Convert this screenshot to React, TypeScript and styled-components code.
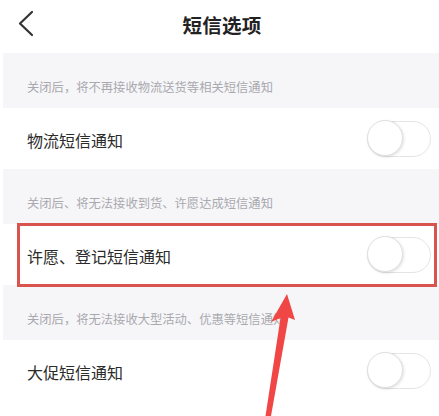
import React from "react";
import styled, { createGlobalStyle } from "styled-components";

const Global = createGlobalStyle`
  html, body { margin: 0; padding: 0; background: #ffffff; }
  body { font-family: "Noto Sans CJK SC", "Noto Sans", sans-serif; }
  * { box-sizing: border-box; }
`;

const Page = styled.div`
  position: relative;
  width: 439px;
  height: 416px;
  overflow: hidden;
  background: #ffffff;
  display: flex;
  flex-direction: column;
`;

const Header = styled.header`
  height: 53px;
  flex: none;
  display: flex;
  align-items: center;
  justify-content: center;
  position: relative;
`;

const BackButton = styled.button`
  position: absolute;
  left: 14px;
  top: 8px;
  width: 24px;
  height: 32px;
  padding: 0;
  border: none;
  background: none;
  display: flex;
  align-items: center;
  justify-content: center;
`;

const Title = styled.h1`
  margin: 0 0 4px 5px;
  font-size: 19.5px;
  font-weight: 700;
  color: #222222;
  letter-spacing: 0.2px;
`;

const Hint = styled.div`
  height: 55px;
  flex: none;
  margin-left: 3px;
  background: #f6f6f9;
  display: flex;
  align-items: flex-end;
  padding: 0 0 13px 24px;
  font-size: 12.3px;
  color: #a9a9ae;
  line-height: 16px;
`;

const Row = styled.div<{ $h: number }>`
  position: relative;
  height: ${(p) => p.$h}px;
  flex: none;
  display: flex;
  align-items: center;
  justify-content: space-between;
  padding: 0 8px 0 27px;
  background: #ffffff;
`;

const Label = styled.span`
  font-size: 16px;
  color: #2b2b2b;
  margin-top: 2px;
`;

const Track = styled.div`
  position: relative;
  width: 64px;
  height: 36px;
  border-radius: 18px;
  border: 1.5px solid #e4e4e6;
  background: #ffffff;
`;

const Knob = styled.div`
  position: absolute;
  left: -1.5px;
  top: -1.5px;
  width: 36px;
  height: 36px;
  border-radius: 50%;
  background: #ffffff;
  border: 1.5px solid #e0e0e2;
  box-shadow: 1px 1px 3px rgba(0, 0, 0, 0.12);
`;

const Highlight = styled.div`
  position: absolute;
  left: 17px;
  right: 2px;
  top: -1px;
  bottom: -2px;
  border: 3px solid #d9534f;
  pointer-events: none;
`;

const ArrowLayer = styled.svg`
  position: absolute;
  left: 0;
  top: 0;
  width: 439px;
  height: 416px;
  pointer-events: none;
`;

const Toggle = () => (
  <Track>
    <Knob />
  </Track>
);

export default function App() {
  return (
    <>
      <Global />
      <Page>
        <Header>
          <BackButton aria-label="返回">
            <svg width="18" height="28" viewBox="0 0 18 28">
              <path d="M15 2 L3 13.5 L15 25" fill="none" stroke="#333" strokeWidth="2.2" strokeLinecap="round" strokeLinejoin="round" />
            </svg>
          </BackButton>
          <Title>短信选项</Title>
        </Header>
        <Hint>关闭后，将不再接收物流送货等相关短信通知</Hint>
        <Row $h={61}>
          <Label>物流短信通知</Label>
          <Toggle />
        </Row>
        <Hint>关闭后、将无法接收到货、许愿达成短信通知</Hint>
        <Row $h={61}>
          <Label>许愿、登记短信通知</Label>
          <Toggle />
          <Highlight />
        </Row>
        <Hint>关闭后，将无法接收大型活动、优惠等短信通知</Hint>
        <Row $h={61}>
          <Label>大促短信通知</Label>
          <Toggle />
        </Row>
        <ArrowLayer viewBox="0 0 439 416">
          <polygon
            points="287,294 295,320 288.5,317.5 271,416 265.5,416 280.5,318 271,322"
            fill="#f04646"
          />
        </ArrowLayer>
      </Page>
    </>
  );
}
